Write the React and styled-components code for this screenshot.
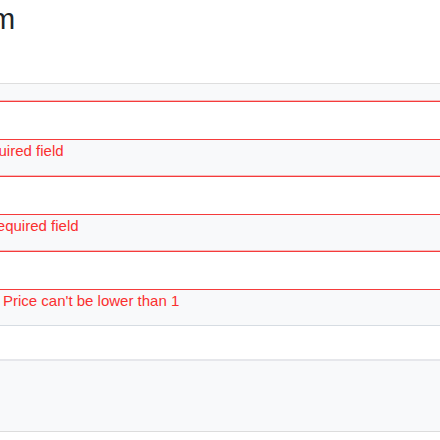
import styled, { createGlobalStyle } from 'styled-components';

const GlobalStyle = createGlobalStyle`
  * { box-sizing: border-box; }
  html, body {
    margin: 0;
    padding: 0;
    overflow: hidden;
    background: #fff;
    font-family: 'Liberation Sans', Arial, sans-serif;
    color: #212529;
  }
`;

const Page = styled.main`
  width: 440px;
  height: 440px;
  overflow: hidden;
`;

const Header = styled.header`
  height: 84px;
  border-bottom: 1px solid #dedede;
  padding-top: 2px;
`;

const Title = styled.h1`
  margin: 0 0 0 -101px;
  font-size: 29px;
  font-weight: 400;
  line-height: 1.2;
  white-space: nowrap;
`;

const Form = styled.form`
  display: flex;
  flex-direction: column;
`;

const Band = styled.div`
  height: ${(p) => p.$h}px;
  background: #f8f9fa;
`;

const Input = styled.input`
  display: block;
  height: 39px;
  margin: 0 -10px;
  width: calc(100% + 20px);
  border: 1px solid #f53b3b;
  box-shadow: 0 0 0 1px rgba(245, 70, 70, 0.35);
  background: #fff;
  font: inherit;
  outline: none;
`;

const ErrorRow = styled.div`
  height: 36px;
  background: #f8f9fa;
  border-bottom: ${(p) => p.$line || 'none'};
`;

const ErrorText = styled.span`
  display: block;
  margin-left: ${(p) => p.$indent}px;
  font-size: 15px;
  line-height: 21px;
  color: #fa2f2f;
  white-space: nowrap;
`;

const Spacer = styled.div`
  height: ${(p) => p.$h}px;
  background: ${(p) => p.$bg};
  border-bottom: ${(p) => p.$line};
`;

export default function App() {
  return (
    <Page>
      <GlobalStyle />
      <Header>
        <Title>Add Item</Title>
      </Header>
      <Form>
        <Band $h={17} />
        <Input name="title" />
        <ErrorRow>
          <ErrorText $indent={-29}>Required field</ErrorText>
        </ErrorRow>
        <Input name="description" />
        <ErrorRow>
          <ErrorText $indent={-14}>Required field</ErrorText>
        </ErrorRow>
        <Input name="price" />
        <ErrorRow $line="1px solid #d6dce2">
          <ErrorText $indent={3}>Price can't be lower than 1</ErrorText>
        </ErrorRow>
        <Spacer $h={35} $bg="#fff" $line="2px solid #e6e7eb" />
        <Spacer $h={71} $bg="#f8f9fa" $line="1px solid #dcdcdc" />
      </Form>
    </Page>
  );
}
